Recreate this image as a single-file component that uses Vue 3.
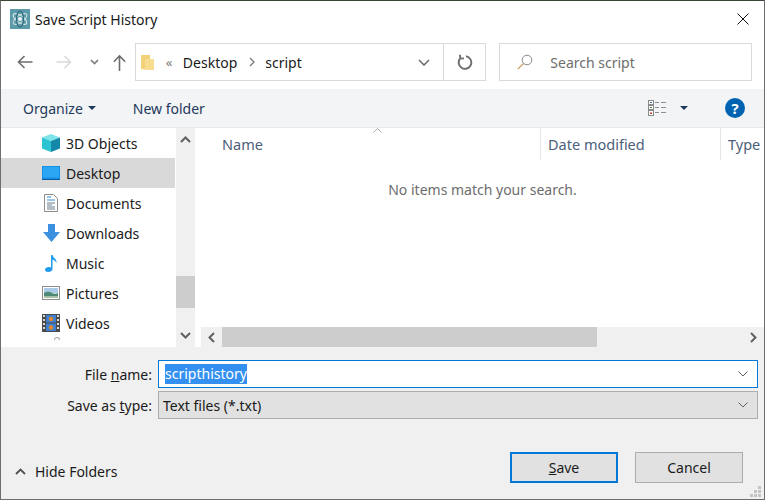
<script setup>
const navItems = ['3D Objects', 'Desktop', 'Documents', 'Downloads', 'Music', 'Pictures', 'Videos']
</script>

<template>
  <div class="dialog">
    <header class="titlebar">
      <svg class="app-icon" width="20" height="20" viewBox="0 0 20 20">
        <rect width="20" height="20" fill="#5b9aa8" />
        <ellipse cx="10" cy="10" rx="8" ry="3.5" fill="none" stroke="#d5e6e8" stroke-width="1.2" transform="rotate(35 10 10)" />
        <ellipse cx="10" cy="10" rx="8" ry="3.5" fill="none" stroke="#c3dadd" stroke-width="1.2" transform="rotate(-35 10 10)" />
        <ellipse cx="10" cy="10" rx="8" ry="3.5" fill="none" stroke="#2f6b7c" stroke-width="1.2" transform="rotate(90 10 10)" />
        <circle cx="10" cy="10" r="2" fill="#eef6f6" />
      </svg>
      <span class="title">Save Script History</span>
      <svg class="close" width="12" height="12" viewBox="0 0 12 12">
        <path d="M.5.5l11 11M11.5.5l-11 11" stroke="#111" fill="none" />
      </svg>
    </header>

    <div class="navbar">
      <div class="nav-buttons">
        <svg width="16" height="14" viewBox="0 0 16 14"><path d="M15.5 7H1.500M7.500 1l-6 6 6 6" fill="none" stroke="#6d6d6d" stroke-width="1.6" /></svg>
        <svg class="fwd" width="16" height="14" viewBox="0 0 16 14"><path d="M.5 7h14M8.500 1l6 6-6 6" fill="none" stroke="#d9d9d9" stroke-width="1.6" /></svg>
        <svg class="recent" width="9" height="6" viewBox="0 0 9 6"><path d="M1 1l3.500 3.500L8 1" fill="none" stroke="#7a7a7a" stroke-width="1.6" /></svg>
        <svg class="up" width="13" height="17" viewBox="0 0 13 17"><path d="M6.500 17V2M.8 7.700l5.700-5.700 5.700 5.700" fill="none" stroke="#6d6d6d" stroke-width="1.6" /></svg>
      </div>
      <div class="address">
        <svg class="folder" width="13" height="17" viewBox="0 0 13 17">
          <path d="M0 1h9v15l-9-1z" fill="#f3d27a" />
          <path d="M4 5h9v11H4z" fill="#f7dd8f" />
        </svg>
        <span class="crumb-more">«</span>
        <span class="crumb">Desktop</span>
        <svg class="crumb-sep" width="6" height="10" viewBox="0 0 6 10"><path d="M1 1l4 4-4 4" fill="none" stroke="#7a7a7a" stroke-width="1.3" /></svg>
        <span class="crumb">script</span>
        <svg class="addr-drop" width="12" height="7" viewBox="0 0 12 7"><path d="M1 1l5 5 5-5" fill="none" stroke="#6d6d6d" stroke-width="1.6" /></svg>
        <div class="refresh">
          <svg width="16" height="16" viewBox="0 0 16 16"><path d="M9 2.300A6.300 6.300 0 1 1 3.600 4M3 .8l.3 3.800 3.700-.2" fill="none" stroke="#6d6d6d" stroke-width="1.900" /></svg>
        </div>
      </div>
      <div class="search">
        <svg width="16" height="16" viewBox="0 0 16 16"><circle cx="10" cy="6" r="4.800" fill="none" stroke="#8a8a8a" /><path d="M6.500 9.500L.8 15.200" stroke="#c8975a" stroke-width="1.100" /></svg>
        <span>Search script</span>
      </div>
    </div>

    <div class="toolbar">
      <span class="tool">Organize</span>
      <i class="caret organize-caret"></i>
      <span class="tool new-folder">New folder</span>
      <svg class="view-icon" width="18" height="16" viewBox="0 0 18 16">
        <rect x=".5" y=".5" width="5" height="4" fill="#fff" stroke="#8a8a8a" />
        <rect x=".5" y="5.500" width="5" height="4" fill="#fff" stroke="#8a8a8a" />
        <rect x=".5" y="10.500" width="5" height="5" fill="#fff" stroke="#8a8a8a" />
        <rect x="2" y="2" width="2" height="1" fill="#3a6ea5" />
        <rect x="2" y="7" width="2" height="1" fill="#3c8c3c" />
        <rect x="2" y="12.500" width="2" height="1.500" fill="#c0392b" />
        <path d="M7 2.500h4M13 2.500h5M7 7.500h4M13 7.500h5M7 12.500h4M13 12.500h5" stroke="#8f8f8f" />
      </svg>
      <i class="caret view-caret"></i>
      <span class="help">?</span>
    </div>

    <div class="body">
      <aside class="tree">
        <ul class="tree-list">
          <li v-for="item in navItems" :key="item" class="tree-item" :class="{ selected: item === 'Desktop' }">
            <svg v-if="item === '3D Objects'" width="18" height="18" viewBox="0 0 18 18">
              <path d="M9 0l9 3.500L9 7 0 3.500z" fill="#7fe3ea" />
              <path d="M0 3.500L9 7v11l-9-3.500z" fill="#2cc4d2" />
              <path d="M18 3.500L9 7v11l9-3.500z" fill="#1587a8" />
            </svg>
            <svg v-else-if="item === 'Desktop'" width="18" height="14" viewBox="0 0 18 14">
              <rect width="18" height="13" fill="#1490e8" />
              <rect x="1" y="1" width="16" height="10.500" fill="#2ba6f2" />
              <path d="M0 13h18v1H0z" fill="#0b5c9e" />
            </svg>
            <svg v-else-if="item === 'Documents'" width="14" height="18" viewBox="0 0 14 18">
              <path d="M.5.5h9l4 4v13H.5z" fill="#fff" stroke="#8c8c8c" />
              <path d="M3 3h4M3 6h8" stroke="#2f8fd8" />
              <path d="M3 9h8M3 11h5M3 13h8M3 15h8" stroke="#6b7f8c" />
            </svg>
            <svg v-else-if="item === 'Downloads'" width="17" height="18" viewBox="0 0 17 18">
              <path d="M5 0h7v8h5l-8.500 10L0 8h5z" fill="#3d8fe0" />
            </svg>
            <svg v-else-if="item === 'Music'" width="12" height="17" viewBox="0 0 12 17">
              <path d="M6 0h1.500c.4 3 4.500 3.500 4 8-.8-2-2.500-3-4-3.300V14c0 2-2.200 3-4.300 3C1.200 17 0 16 0 14.700 0 13 2 12 4 12c.8 0 1.500.2 2 .5z" fill="#1f9cee" />
            </svg>
            <svg v-else-if="item === 'Pictures'" width="18" height="14" viewBox="0 0 18 14">
              <rect x=".5" y=".5" width="17" height="13" fill="#fff" stroke="#8c8c8c" />
              <rect x="2" y="2" width="14" height="5" fill="#a9cbe8" />
              <path d="M2 7c3-2 6-1 8 0s4 1 6 0v5H2z" fill="#4f8a78" />
              <path d="M2 10h14v2H2z" fill="#a8bfa8" />
            </svg>
            <svg v-else-if="item === 'Videos'" width="18" height="18" viewBox="0 0 18 18">
              <rect width="18" height="18" fill="#4a4a4a" />
              <path d="M1 1h2v2H1zM1 5h2v2H1zM1 9h2v2H1zM1 13h2v2H1zM15 1h2v2h-2zM15 5h2v2h-2zM15 9h2v2h-2zM15 13h2v2h-2z" fill="#d8d8d8" />
              <rect x="4" y="1" width="10" height="7.500" fill="#3f7fd0" />
              <rect x="4" y="9.500" width="10" height="7.500" fill="#3f7fd0" />
              <circle cx="9" cy="5" r="2.200" fill="#e0872e" />
              <circle cx="9" cy="13.500" r="2.200" fill="#e0872e" />
            </svg>
            <span>{{ item }}</span>
          </li>
        </ul>
        <span class="tree-peek"></span>
      </aside>

      <div class="vscroll">
        <svg class="sb-arrow" width="11" height="7" viewBox="0 0 11 7"><path d="M1 6l4.500-4.500L10 6" fill="none" stroke="#606060" stroke-width="2" /></svg>
        <div class="vtrack"><div class="vthumb"></div></div>
        <svg class="sb-arrow" width="11" height="7" viewBox="0 0 11 7"><path d="M1 1l4.500 4.500L10 1" fill="none" stroke="#606060" stroke-width="2" /></svg>
      </div>

      <main class="files">
        <div class="columns">
          <div class="col col-name">
            <svg class="sort" width="9" height="5" viewBox="0 0 9 5"><path d="M.5 4.500l4-4 4 4" fill="none" stroke="#a8a8a8" /></svg>
            Name
          </div>
          <div class="col col-date">Date modified</div>
          <div class="col col-type">Type</div>
        </div>
        <p class="empty">No items match your search.</p>
        <div class="hscroll">
          <svg width="7" height="11" viewBox="0 0 7 11"><path d="M6 1L1.500 5.500 6 10" fill="none" stroke="#606060" stroke-width="2" /></svg>
          <div class="htrack"><div class="hthumb"></div></div>
          <svg width="7" height="11" viewBox="0 0 7 11"><path d="M1 1l4.500 4.500L1 10" fill="none" stroke="#606060" stroke-width="2" /></svg>
        </div>
      </main>
    </div>

    <footer class="panel">
      <div class="fields">
        <label class="field-label">File <u>n</u>ame:</label>
        <div class="combo combo-active">
          <span class="selected-text">scripthistory</span>
          <svg width="10" height="6" viewBox="0 0 10 6"><path d="M.5.500L5 5 9.500.5" fill="none" stroke="#606060" /></svg>
        </div>
        <label class="field-label">Save as <u>t</u>ype:</label>
        <div class="combo">
          <span class="type-text">Text files (*.txt)</span>
          <svg width="10" height="6" viewBox="0 0 10 6"><path d="M.5.500L5 5 9.500.5" fill="none" stroke="#606060" /></svg>
        </div>
      </div>
      <div class="actions">
        <div class="hide-folders">
          <svg width="11" height="7" viewBox="0 0 11 7"><path d="M1 6l4.500-4.500L10 6" fill="none" stroke="#505050" stroke-width="1.800" /></svg>
          <span>Hide Folders</span>
        </div>
        <button class="btn btn-default"><u>S</u>ave</button>
        <button class="btn">Cancel</button>
      </div>
      <svg class="grip" width="12" height="12" viewBox="0 0 12 12">
        <path d="M8 0h3v3H8zM4 4h3v3H4zM8 4h3v3H8zM0 8h3v3H0zM4 8h3v3H4zM8 8h3v3H8z" fill="#c4c4c4" />
      </svg>
    </footer>
  </div>
</template>

<style>
html,
body {
  margin: 0;
  background: #fff;
}
</style>

<style scoped>
* {
  box-sizing: border-box;
}
.dialog {
  width: 765px;
  height: 500px;
  display: flex;
  flex-direction: column;
  overflow: hidden;
  background: #fff;
  border: 1px solid #6e6e6e;
  border-top-color: #3a4635;
  font-family: "Noto Sans", "Open Sans", sans-serif;
  font-size: 14px;
  color: #1a1a1a;
}
.titlebar {
  height: 38px;
  flex: none;
  display: flex;
  align-items: center;
  padding: 0 15px 2px 9px;
}
.app-icon {
  margin-right: 5px;
}
.title {
  flex: 1;
}
.navbar {
  height: 50px;
  flex: none;
  display: flex;
  padding: 4px 12px 8px 0;
}
.nav-buttons {
  width: 134px;
  display: flex;
  align-items: center;
  padding-left: 16px;
}
.fwd {
  margin-left: 23px;
}
.recent {
  margin-left: 18px;
}
.up {
  margin-left: 14px;
}
.address {
  width: 352px;
  display: flex;
  align-items: center;
  border: 1px solid #d9d9d9;
  padding-left: 5px;
}
.folder {
  margin-right: 12px;
}
.crumb-more {
  width: 17px;
  color: #7a7a7a;
  font-size: 13px;
}
.crumb-sep {
  margin: 0 10px 0 12px;
}
.addr-drop {
  margin-left: auto;
  margin-right: 13px;
}
.refresh {
  width: 42px;
  height: 100%;
  display: flex;
  align-items: center;
  justify-content: center;
  border-left: 1px solid #d9d9d9;
}
.search {
  width: 253px;
  margin-left: 13px;
  display: flex;
  align-items: center;
  gap: 17px;
  padding-left: 17px;
  border: 1px solid #d9d9d9;
  color: #6d6d6d;
}
.toolbar {
  height: 39px;
  flex: none;
  display: flex;
  align-items: center;
  padding-left: 22px;
  background: #f3f4f6;
  border-bottom: 1px solid #e8e8e8;
}
.tool {
  color: #1e395b;
}
.caret {
  display: block;
  width: 0;
  height: 0;
  border-left: 4px solid transparent;
  border-right: 4px solid transparent;
  border-top: 4px solid #1e395b;
}
.organize-caret {
  margin-left: 5px;
}
.new-folder {
  margin-left: 37px;
}
.view-icon {
  margin-left: auto;
}
.view-caret {
  margin-left: 14px;
}
.help {
  width: 20px;
  height: 20px;
  margin: 0 19px 0 37px;
  border-radius: 50%;
  background: #0063b1;
  color: #fff;
  font-weight: 700;
  font-size: 15px;
  line-height: 20px;
  text-align: center;
}
.body {
  flex: 1;
  min-height: 0;
  display: flex;
}
.tree {
  width: 174px;
  flex: none;
  overflow: hidden;
}
.tree-list {
  margin: 0;
  padding: 0;
  list-style: none;
}
.tree-item {
  height: 30px;
  display: grid;
  grid-template-columns: 18px auto;
  justify-content: start;
  align-items: center;
  column-gap: 6px;
  padding-left: 41px;
  justify-items: center;
}
.tree-item span {
  justify-self: start;
}
.tree-item.selected {
  background: #d9d9d9;
}
.tree-peek {
  display: block;
  width: 6px;
  height: 3px;
  margin: -1px 0 0 53px;
  border: 1px solid #aaa;
  border-bottom: 0;
  border-radius: 3px 3px 0 0;
}
.vscroll {
  width: 19px;
  flex: none;
  margin-left: 1px;
  display: flex;
  flex-direction: column;
  align-items: center;
  background: #f0f0f0;
  padding: 8px 0 8px;
}
.vtrack {
  flex: 1;
  width: 100%;
  padding-top: 133px;
}
.vthumb {
  height: 32px;
  background: #cdcdcd;
}
.files {
  flex: 1;
  min-width: 0;
  display: flex;
  flex-direction: column;
  margin-left: 6px;
}
.columns {
  height: 32px;
  display: flex;
  flex: none;
  color: #4c607a;
  font-size: 14.5px;
}
.col {
  position: relative;
  padding: 6px 0 0 7px;
  border-right: 1px solid #e5e5e5;
  white-space: nowrap;
}
.col-name {
  width: 340px;
  padding-left: 21px;
}
.col-date {
  width: 180px;
}
.col-type {
  border-right: 0;
  flex: 1;
  overflow: hidden;
}
.sort {
  position: absolute;
  left: 172px;
  top: 0;
}
.empty {
  flex: 1;
  margin: 0;
  padding-top: 20px;
  text-align: center;
  color: #6d6d6d;
}
.hscroll {
  height: 20px;
  flex: none;
  display: flex;
  align-items: center;
  padding: 0 7px;
  background: #f0f0f0;
}
.htrack {
  flex: 1;
  height: 100%;
  margin: 0 7px;
}
.hthumb {
  width: 375px;
  height: 100%;
  background: #cdcdcd;
}
.panel {
  height: 152px;
  flex: none;
  position: relative;
  display: flex;
  flex-direction: column;
  background: #f0f0f0;
  padding: 13px 6px 0 14px;
}
.fields {
  display: grid;
  grid-template-columns: 137px 1fr;
  grid-template-rows: 28px 28px;
  column-gap: 6px;
  row-gap: 3px;
  align-items: center;
}
.field-label {
  text-align: right;
}
.combo {
  height: 100%;
  display: flex;
  align-items: center;
  justify-content: space-between;
  padding: 0 9px 0 6px;
  background: #e1e1e1;
  border: 1px solid #adadad;
}
.combo-active {
  background: #fff;
  border-color: #0078d7;
}
.selected-text {
  background: #3390f0;
  color: #fff;
  line-height: 20px;
}
.type-text {
  margin-left: -2px;
}
.actions {
  display: flex;
  align-items: center;
  margin-top: 33px;
  padding-right: 15px;
}
.hide-folders {
  display: flex;
  align-items: center;
  gap: 9px;
  margin-top: 8px;
  margin-right: auto;
}
.btn {
  width: 108px;
  height: 31px;
  margin-left: 17px;
  padding: 0 0 1px;
  background: #e1e1e1;
  border: 1px solid #adadad;
  border-radius: 0;
  font: inherit;
  color: #1a1a1a;
}
.btn-default {
  border: 2px solid #0078d7;
}
.grip {
  position: absolute;
  right: 2px;
  bottom: 1px;
}
</style>
